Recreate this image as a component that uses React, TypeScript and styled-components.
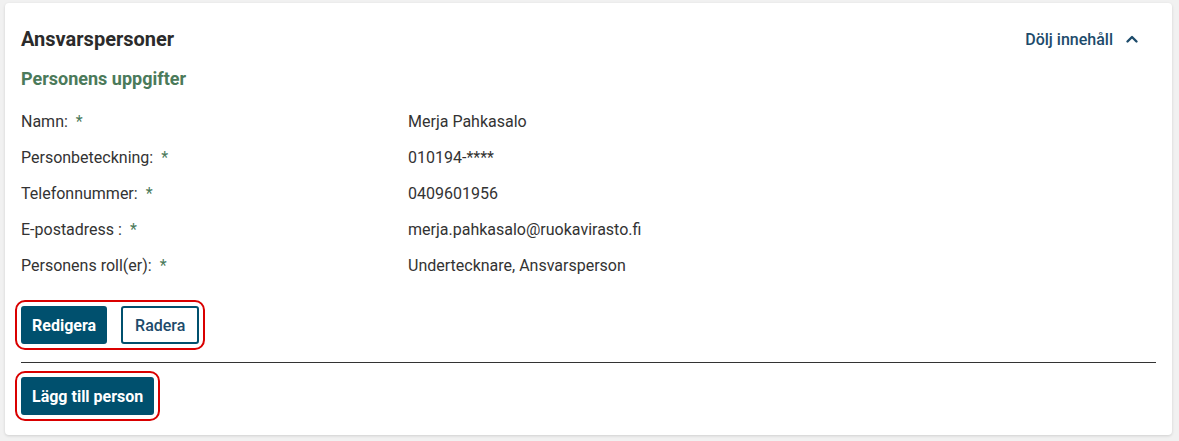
import React from "react";
import styled, { createGlobalStyle } from "styled-components";

const GlobalStyle = createGlobalStyle`
  body {
    margin: 0;
    background-color: #f1f1f1;
    font-family: Roboto, "Liberation Sans", sans-serif;
    color: #333333;
  }
`;

const Page = styled.div`
  padding: 3px 7px 6px 5px;
`;

const Card = styled.section`
  background-color: #ffffff;
  border-radius: 4px;
  box-shadow: 0 1px 3px rgba(0, 0, 0, 0.14);
  padding: 22px 16px 14px 16px;
`;

const CardHeader = styled.div`
  display: flex;
  justify-content: space-between;
  align-items: center;
`;

const Title = styled.h2`
  margin: 0;
  font-size: 20px;
  font-weight: 700;
  line-height: 28px;
  color: #2b2b2b;
`;

const ToggleButton = styled.button`
  display: flex;
  align-items: center;
  gap: 12px;
  margin-right: 17px;
  padding: 0;
  border: 0;
  background: transparent;
  font-family: inherit;
  font-size: 16px;
  font-weight: 500;
  color: #1d4b6b;
  cursor: pointer;
`;

const SubTitle = styled.h3`
  margin: 13px 0 0;
  font-size: 18px;
  font-weight: 700;
  line-height: 25px;
  color: #4b7a5a;
`;

const InfoList = styled.dl`
  display: grid;
  grid-template-columns: 387px 1fr;
  grid-auto-rows: 36px;
  align-items: center;
  margin: 12px 0 0;
  font-size: 16px;
`;

const Label = styled.dt`
  margin: 0;
  color: #333333;
`;

const Required = styled.span`
  margin-left: 8px;
  color: #4b7a5a;
`;

const Value = styled.dd`
  margin: 0;
  color: #333333;
`;

const FocusRing = styled.div`
  display: inline-flex;
  gap: 14px;
  padding: 4px;
  border: 2px solid #d90000;
  border-radius: 10px;
  margin-left: -6px;
`;

const Actions = styled.div`
  margin-top: 17px;
`;

const Button = styled.button<{ $variant?: "primary" | "secondary" }>`
  height: 38px;
  padding: 0 ${(p) => (p.$variant === "secondary" ? "12px" : "9px")};
  border-radius: 3px;
  border: 2px solid #00506e;
  background-color: ${(p) => (p.$variant === "secondary" ? "#ffffff" : "#00506e")};
  color: ${(p) => (p.$variant === "secondary" ? "#1d4b6b" : "#ffffff")};
  font-family: inherit;
  font-size: 16px;
  font-weight: ${(p) => (p.$variant === "secondary" ? 500 : 700)};
  cursor: pointer;
`;

const Divider = styled.hr`
  margin: 12px 0 8px;
  border: 0;
  border-top: 1px solid #333333;
`;

const fields = [
  { label: "Namn:", value: "Merja Pahkasalo" },
  { label: "Personbeteckning:", value: "010194-****" },
  { label: "Telefonnummer:", value: "0409601956" },
  { label: "E-postadress :", value: "merja.pahkasalo@ruokavirasto.fi" },
  { label: "Personens roll(er):", value: "Undertecknare, Ansvarsperson" },
];

function ChevronUp() {
  return (
    <svg width="14" height="14" viewBox="0 0 14 14" fill="none">
      <path d="M2.5 9.5 L7 5 L11.5 9.5" stroke="#1d4b6b" strokeWidth="2.4" strokeLinecap="round" strokeLinejoin="round" />
    </svg>
  );
}

export default function App() {
  return (
    <>
      <GlobalStyle />
      <Page>
        <Card>
          <CardHeader>
            <Title>Ansvarspersoner</Title>
            <ToggleButton>
              Dölj innehåll
              <ChevronUp />
            </ToggleButton>
          </CardHeader>
          <SubTitle>Personens uppgifter</SubTitle>
          <InfoList>
            {fields.map((f) => (
              <React.Fragment key={f.label}>
                <Label>
                  {f.label}
                  <Required>*</Required>
                </Label>
                <Value>{f.value}</Value>
              </React.Fragment>
            ))}
          </InfoList>
          <Actions>
            <FocusRing>
              <Button>Redigera</Button>
              <Button $variant="secondary">Radera</Button>
            </FocusRing>
          </Actions>
          <Divider />
          <FocusRing>
            <Button>Lägg till person</Button>
          </FocusRing>
        </Card>
      </Page>
    </>
  );
}
